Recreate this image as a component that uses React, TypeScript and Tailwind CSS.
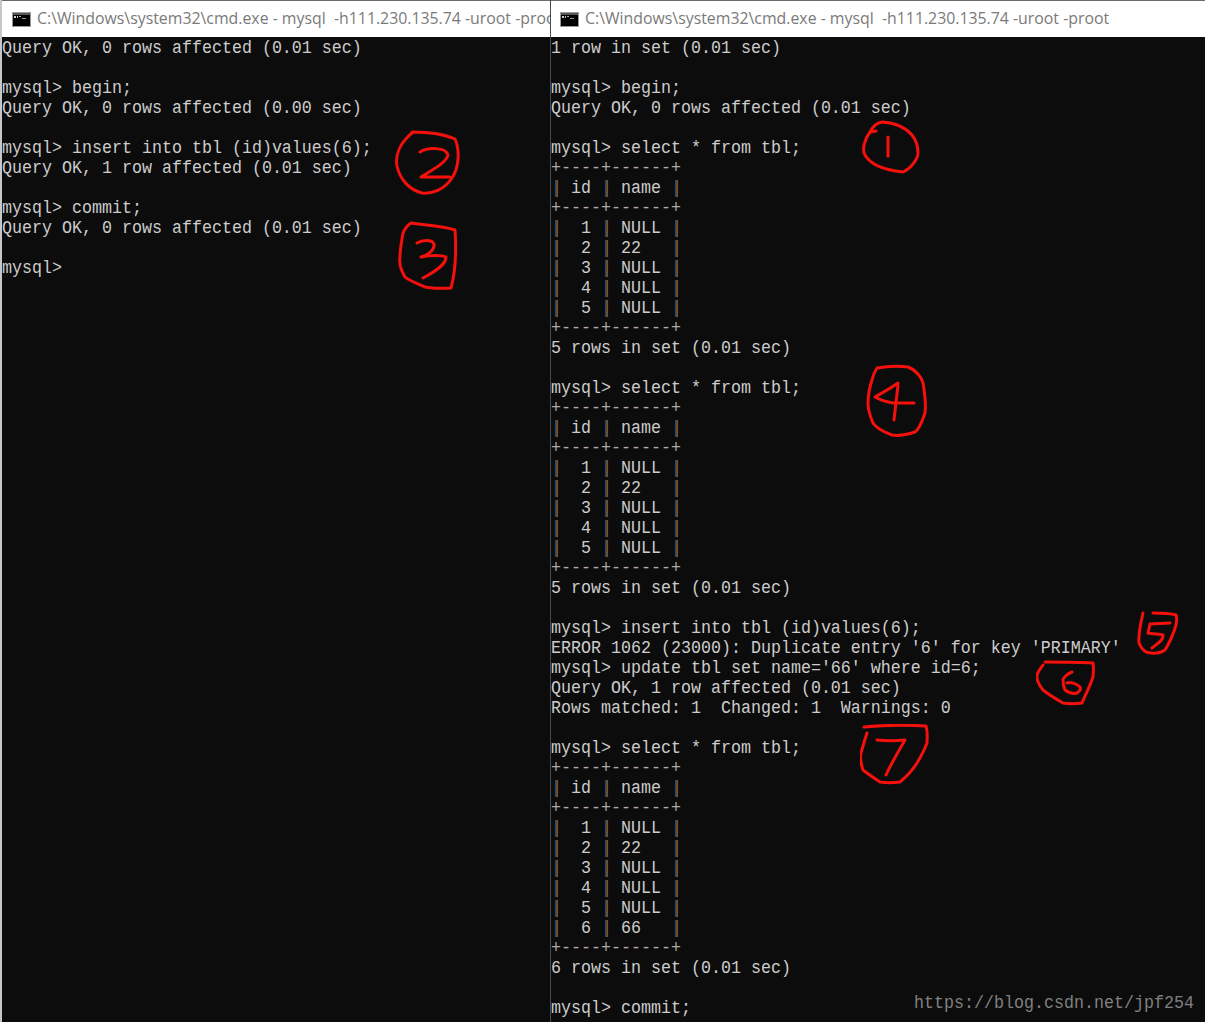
const ROW = "h-5 leading-5 whitespace-pre scale-y-[1.14]";
const PIPE = "text-[#3a6478] [text-shadow:1px_0_0_#b5562a]";

function Bar({ title, right }: { title: string; right?: boolean }) {
  return (
    <div className={`h-[37px] bg-white border-t border-[#6a6a6a] flex items-center overflow-hidden shrink-0 ${right ? "pl-[9px]" : "pl-[10px]"}`}>
      <svg width="19" height="15" viewBox="0 0 19 15" className="shrink-0">
        <rect width="19" height="15" fill="#9a9a9a" />
        <rect x="1" y="1" width="17" height="13" fill="#000" />
        <rect x="1" y="1" width="17" height="2" fill="#555" />
        <rect x="2" y="4" width="2" height="2" fill="#ccc" />
        <rect x="5" y="4" width="1" height="2" fill="#bbb" />
        <rect x="7" y="4" width="2" height="1" fill="#aaa" />
        <rect x="10" y="6" width="4" height="1" fill="#999" />
      </svg>
      <span className="ml-[6px] text-[15.85px] text-[#7a7a7a] whitespace-pre font-['Open_Sans',sans-serif]">{title}</span>
    </div>
  );
}

function Line({ t }: { t: string }) {
  return <div className={ROW}>{t === "" ? " " : t}</div>;
}

function TableBorder() {
  return <div className={`${ROW} text-[#b0a8a4]`}>+----+------+</div>;
}

function TableRow({ a, b }: { a: string; b: string }) {
  return (
    <div className={ROW}>
      <span className={PIPE}>|</span>
      {a}
      <span className={PIPE}>|</span>
      {b}
      <span className={PIPE}>|</span>
    </div>
  );
}

function Table({ rows }: { rows: [string, string][] }) {
  return (
    <>
      <TableBorder />
      <TableRow a=" id " b=" name " />
      <TableBorder />
      {rows.map((r) => (
        <TableRow key={r[0]} a={`  ${r[0]} `} b={` ${r[1].padEnd(5, " ")}`} />
      ))}
      <TableBorder />
    </>
  );
}

const five: [string, string][] = [
  ["1", "NULL"],
  ["2", "22"],
  ["3", "NULL"],
  ["4", "NULL"],
  ["5", "NULL"],
];

const TITLE = "C:\\Windows\\system32\\cmd.exe - mysql  -h111.230.135.74 -uroot -proot";

function Mark({ x, y, w, h, d }: { x: number; y: number; w: number; h: number; d: string }) {
  return (
    <svg
      className="absolute"
      style={{ left: x, top: y }}
      width={w}
      height={h}
      viewBox={`0 0 ${w} ${h}`}
      fill="none"
      stroke="#f5100c"
      strokeWidth="3"
      strokeLinecap="round"
      strokeLinejoin="round"
    >
      <path d={d} />
    </svg>
  );
}

export default function App() {
  return (
    <div className="relative w-[1205px] h-[1022px] overflow-hidden flex bg-[#0c0c0c] text-[#cccccc] text-[16.67px] font-['Liberation_Mono',monospace]">
      <div className="w-[2px] shrink-0 bg-[#c6c6c6]" />
      <div className="w-[548px] shrink-0 flex flex-col overflow-hidden">
        <Bar title={TITLE} />
        <div className="flex flex-col pt-[1px]">
          <Line t="Query OK, 0 rows affected (0.01 sec)" />
          <Line t="" />
          <Line t="mysql> begin;" />
          <Line t="Query OK, 0 rows affected (0.00 sec)" />
          <Line t="" />
          <Line t="mysql> insert into tbl (id)values(6);" />
          <Line t="Query OK, 1 row affected (0.01 sec)" />
          <Line t="" />
          <Line t="mysql> commit;" />
          <Line t="Query OK, 0 rows affected (0.01 sec)" />
          <Line t="" />
          <Line t="mysql>" />
        </div>
      </div>
      <div className="flex-1 flex flex-col border-l border-[#4a4a4a]">
        <Bar title={TITLE} right />
        <div className="flex flex-col pt-[1px]">
          <Line t="1 row in set (0.01 sec)" />
          <Line t="" />
          <Line t="mysql> begin;" />
          <Line t="Query OK, 0 rows affected (0.01 sec)" />
          <Line t="" />
          <Line t="mysql> select * from tbl;" />
          <Table rows={five} />
          <Line t="5 rows in set (0.01 sec)" />
          <Line t="" />
          <Line t="mysql> select * from tbl;" />
          <Table rows={five} />
          <Line t="5 rows in set (0.01 sec)" />
          <Line t="" />
          <Line t="mysql> insert into tbl (id)values(6);" />
          <Line t="ERROR 1062 (23000): Duplicate entry '6' for key 'PRIMARY'" />
          <Line t="mysql> update tbl set name='66' where id=6;" />
          <Line t="Query OK, 1 row affected (0.01 sec)" />
          <Line t="Rows matched: 1  Changed: 1  Warnings: 0" />
          <Line t="" />
          <Line t="mysql> select * from tbl;" />
          <Table rows={[...five, ["6", "66"]]} />
          <Line t="6 rows in set (0.01 sec)" />
          <Line t="" />
          <Line t="mysql> commit;" />
        </div>
      </div>

      {/* red pen annotations */}
      <Mark x={394} y={130} w={68} h={66} d="M18 2 C32 2 50 4 61 9 C66 20 65 38 58 48 C50 60 38 64 28 63 C16 60 6 50 3 36 C1 24 7 12 18 3 M26 22 C34 17 52 17 54 25 C52 33 38 40 27 47 L56 47" />
      <Mark x={398} y={220} w={60} h={72} d="M13 3 C25 5 45 6 57 10 C58 25 58 50 53 68 C42 69 35 68 27 67 C18 63 10 60 7 57 C3 50 1 45 2 37 C2 28 4 20 5 13 C7 8 10 5 13 3 M19 23 C24 20 34 19 36 24 C37 30 30 35 23 37 C32 35 44 35 48 37 C48 44 40 50 25 58" />
      <Mark x={862} y={120} w={58} h={54} d="M14 11 L8 12 C2 20 0 30 3 35 C8 44 22 50 41 52 C50 48 56 38 56 33 C56 26 54 20 50 15 C44 8 36 3 20 2 C14 3 10 8 8 12 M26 17 L26 36" />
      <Mark x={866} y={364} w={62} h={74} d="M11 4 C22 2 35 2 42 3 C50 6 56 14 57 19 C59 30 60 40 59 49 C56 58 52 66 49 68 C40 71 32 72 26 71 C18 68 10 64 7 59 C4 52 2 46 2 39 C2 30 4 22 6 16 C7 11 9 7 11 4 M32 19 C25 24 16 29 9 33 C14 36 22 38 27 39 C34 39 42 39 48 39 M32 21 L28 56" />
      <Mark x={1137} y={610} w={42} h={46} d="M6 3 C4 12 1 24 2 33 C5 41 10 43 14 43 C20 44 25 42 28 40 C33 32 37 22 39 15 C40 10 40 7 39 5 C32 3 24 3 16 3 M33 13 L13 14 L11 23 C15 24 24 24 26 25 C27 30 20 34 15 38" />
      <Mark x={1036} y={660} w={60} h={46} d="M9 2 C25 2 42 2 57 3 C58 8 57 15 57 17 C54 26 49 36 46 43 C40 44 33 44 27 43 C20 39 12 34 7 30 C3 25 0 20 1 15 C2 11 5 8 7 5 M36 12 C31 14 27 18 27 20 C27 25 28 28 29 30 C33 33 38 34 41 33 C44 31 45 29 44 27 C40 23 34 22 31 23" />
      <Mark x={860} y={724} w={70} h={62} d="M4 3 C25 1 50 1 66 2 C68 8 67 14 67 19 C64 27 60 34 57 39 C52 47 46 53 40 58 C33 59 26 59 20 58 C14 54 8 50 3 46 C1 40 0 34 1 29 C3 22 5 15 7 9 M17 16 C26 17 37 17 45 16 C38 28 31 40 26 51" />

      <div className={`absolute left-[914px] top-[993px] ${ROW} text-[#808080]`}>https://blog.csdn.net/jpf254</div>
    </div>
  );
}
